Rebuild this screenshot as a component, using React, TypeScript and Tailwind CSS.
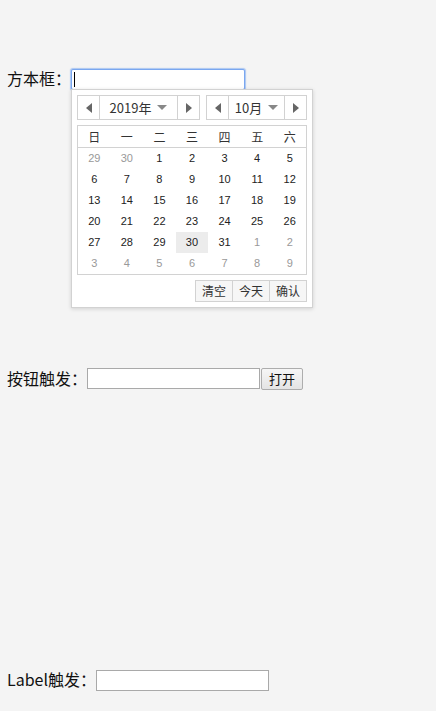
import { useState } from "react"

const font = { fontFamily: '"Noto Sans CJK SC", "Noto Sans", sans-serif' }

const weekdays = ["日", "一", "二", "三", "四", "五", "六"]

// 2019年10月, 周二开始
const weeks: { d: number; cur: boolean }[][] = (() => {
  const cells: { d: number; cur: boolean }[] = []
  cells.push({ d: 29, cur: false }, { d: 30, cur: false })
  for (let i = 1; i <= 31; i++) cells.push({ d: i, cur: true })
  let n = 1
  while (cells.length < 42) cells.push({ d: n++, cur: false })
  const rows = []
  for (let i = 0; i < 6; i++) rows.push(cells.slice(i * 7, i * 7 + 7))
  return rows
})()

function Arrow({ dir }: { dir: "l" | "r" }) {
  return (
    <div className="flex h-full w-[21px] items-center justify-center">
      <svg width="6" height="10" viewBox="0 0 6 10">
        {dir === "l" ? <path d="M6 0 L0 5 L6 10 Z" fill="#666" /> : <path d="M0 0 L6 5 L0 10 Z" fill="#666" />}
      </svg>
    </div>
  )
}

function Select({ label, width }: { label: string; width: string }) {
  return (
    <div className={`flex h-[25px] items-stretch border border-[#d2d2d2] bg-white ${width}`}>
      <Arrow dir="l" />
      <div className="flex flex-1 items-center justify-center gap-[6px] border-x border-[#d2d2d2] text-[13px] text-[#333]">
        <span>{label}</span>
        <svg width="10" height="5" viewBox="0 0 10 5">
          <path d="M0 0 L10 0 L5 5 Z" fill="#888" />
        </svg>
      </div>
      <Arrow dir="r" />
    </div>
  )
}

function Calendar() {
  return (
    <div
      className="absolute left-[71px] top-[89px] z-10 w-[242px] border border-[#d2d2d2] bg-white px-[5px] pt-[5px] pb-[5px] shadow-[0_1px_4px_rgba(0,0,0,0.15)]"
      style={font}
    >
      <div className="flex justify-between">
        <Select label="2019年" width="w-[123px]" />
        <Select label="10月" width="w-[101px]" />
      </div>
      <div className="mt-[5px] border border-[#d2d2d2]">
        <div className="grid h-[22px] grid-cols-7 items-center border-b border-[#d2d2d2] text-center text-[12px] text-[#333]">
          {weekdays.map((w) => (
            <span key={w}>{w}</span>
          ))}
        </div>
        {weeks.map((row, i) => (
          <div key={i} className="grid h-[21px] grid-cols-7 text-center text-[11px]" style={{ fontFamily: '"Liberation Sans", sans-serif' }}>
            {row.map((c, j) => (
              <span
                key={j}
                className={`flex items-center justify-center ${c.cur ? "text-[#222]" : "text-[#999]"} ${
                  c.cur && c.d === 30 ? "bg-[#ececec]" : ""
                }`}
              >
                {c.d}
              </span>
            ))}
          </div>
        ))}
      </div>
      <div className="mt-[5px] flex justify-end">
        <div className="flex h-[22px] border border-[#d2d2d2] bg-[#f6f6f6] text-[12px] text-[#333]">
          <span className="flex w-[36px] items-center justify-center">清空</span>
          <span className="flex w-[37px] items-center justify-center border-l border-[#d2d2d2]">今天</span>
          <span className="flex w-[37px] items-center justify-center border-l border-[#d2d2d2]">确认</span>
        </div>
      </div>
    </div>
  )
}

export default function App() {
  const [v, setV] = useState("")
  return (
    <div className="relative min-h-[711px] bg-[#f4f4f4] pl-[7px] text-[16px] text-[#111]" style={font}>
      <div className="pt-[68px]">
        <div className="flex h-[22px] items-center">
          <span className="-mt-[2px]">方本框：</span>
          <div className="relative">
            <input
              value={v}
              onChange={(e) => setV(e.target.value)}
              className="block h-[21px] w-[174px] rounded-[2px] border border-[#7aa7f0] bg-white px-[2px] text-[13px] outline-none shadow-[0_0_1px_1px_rgba(122,167,240,0.6)]"
            />
            {/* 光标 */}
            {v === "" && <span className="absolute left-[3px] top-[3px] h-[15px] w-px bg-black" />}
          </div>
        </div>
        <Calendar />
      </div>

      <div className="mt-[277px] flex h-[23px] items-center">
        <span className="-mt-[2px]">按钮触发：</span>
        <input className="h-[21px] w-[173px] border border-[#a9a9a9] bg-white outline-none" />
        <button className="ml-px h-[22px] w-[42px] rounded-[2px] border border-[#adadad] bg-gradient-to-b from-[#f6f6f6] to-[#e4e4e4] text-[13px] text-[#111]">
          打开
        </button>
      </div>

      <div className="mt-[279px] flex h-[22px] items-center">
        <label className="-mt-[2px]">Label触发：</label>
        <input className="h-[21px] w-[173px] border border-[#a9a9a9] bg-white outline-none" />
      </div>
    </div>
  )
}
